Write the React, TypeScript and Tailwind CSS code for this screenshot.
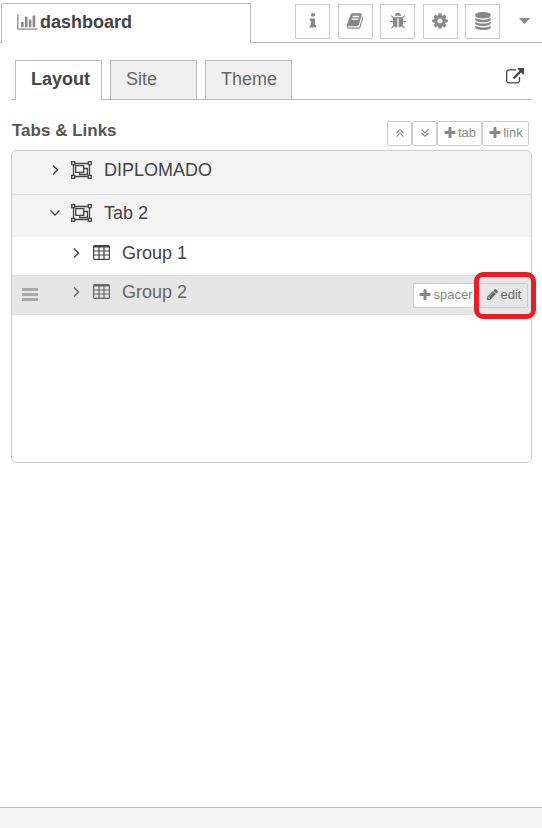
import type { ReactNode } from "react";

const PATHS = {
  chart:
    "M640 896v512h-256v-512h256zm384-512v1024h-256v-1024h256zm1024 1152v128h-2048v-1536h128v1408h1920zm-640-896v768h-256v-768h256zm384-384v1152h-256v-1152h256z",
  info: "M1216 1344v128q0 26-19 45t-45 19h-512q-26 0-45-19t-19-45v-128q0-26 19-45t45-19h64v-384h-64q-26 0-45-19t-19-45v-128q0-26 19-45t45-19h384q26 0 45 19t19 45v576h64q26 0 45 19t19 45zm-128-1152v192q0 26-19 45t-45 19h-256q-26 0-45-19t-19-45v-192q0-26 19-45t45-19h256q26 0 45 19t19 45z",
  book: "M1703 478q40 57 18 129l-275 906q-19 64-76.5 107.5t-122.5 43.5h-923q-77 0-148.5-53.5t-99.5-131.5q-24-67-2-127 0-4 3-27t4-37q1-8-3-21.5t-3-19.5q2-11 8-21t16.5-23.5 16.5-23.5q23-38 45-91.5t30-91.5q3-10 .5-30t-.5-28q3-11 17-28t17-23q21-36 42-92t25-90q1-9-2.5-32t.5-28q4-13 22-30.5t22-22.5q19-26 42.5-84.5t27.5-96.5q1-8-3-25.5t-2-26.5q2-8 9-18t18-23 17-21q8-12 16.5-30.5t15-35 16-36 19.5-32 26.5-23.5 36-11.5 47.5 5.5l-1 3q38-9 51-9h761q74 0 114 56t18 130l-274 906q-36 119-71.5 153.5t-128.5 34.5h-869q-27 0-38 15-11 16-1 43 24 70 144 70h923q29 0 56-15.5t35-41.5l300-987q7-22 5-57 38 15 59 43zm-1064 2q-4 13 2 22.5t20 9.5h608q13 0 25.5-9.5t16.5-22.5l21-64q4-13-2-22.5t-20-9.5h-608q-13 0-25.5 9.5t-16.5 22.5zm-83 256q-4 13 2 22.5t20 9.5h608q13 0 25.5-9.5t16.5-22.5l21-64q4-13-2-22.5t-20-9.5h-608q-13 0-25.5 9.5t-16.5 22.5z",
  bug: "M1696 960q0 26-19 45t-45 19h-224q0 171-67 290l208 209q19 19 19 45t-19 45q-18 19-45 19t-45-19l-198-197q-5 5-15 13t-42 28.5-65 36.5-82 29-97 13v-896h-128v896q-51 0-101.5-13.5t-87-33-66-39-43.5-32.5l-15-14-183 207q-20 21-48 21-24 0-43-16-19-18-20.5-44.5t15.5-46.5l202-227q-58-114-58-274h-224q-26 0-45-19t-19-45 19-45 45-19h224v-294l-173-173q-19-19-19-45t19-45 45-19 45 19l173 173h844l173-173q19-19 45-19t45 19 19 45-19 45l-173 173v294h224q26 0 45 19t19 45zm-480-576h-640q0-133 93.5-226.5t226.5-93.5 226.5 93.5 93.5 226.5z",
  cog: "M1152 896q0-106-75-181t-181-75-181 75-75 181 75 181 181 75 181-75 75-181zm512-109v222q0 12-8 23t-20 13l-185 28q-19 54-39 91 35 50 107 138 10 12 10 25t-9 23q-27 37-99 108t-94 71q-12 0-26-9l-138-108q-44 23-91 38-16 136-29 186-7 28-36 28h-222q-14 0-24.5-8.5t-11.5-21.5l-28-184q-49-16-90-37l-141 107q-10 9-25 9-14 0-25-11-126-114-165-168-7-10-7-23 0-12 8-23 15-21 51-66.5t54-70.5q-27-50-41-99l-183-27q-13-2-21-12.5t-8-23.5v-222q0-12 8-23t19-13l186-28q14-46 39-92-40-57-107-138-10-12-10-24 0-10 9-23 26-36 98.5-107.5t94.5-71.5q13 0 26 10l138 107q44-23 91-38 16-136 29-186 7-28 36-28h222q14 0 24.5 8.5t11.5 21.5l28 184q49 16 90 37l142-107q9-9 24-9 13 0 25 10 129 119 165 170 7 8 7 22 0 12-8 23-15 21-51 66.5t-54 70.5q26 50 41 98l183 28q13 2 21 12.5t8 23.5z",
  database:
    "M896 768q237 0 443-43t325-127v170q0 69-103 128t-280 93.5-385 34.5-385-34.5-280-93.5-103-128v-170q119 84 325 127t443 43zm0 768q237 0 443-43t325-127v170q0 69-103 128t-280 93.5-385 34.5-385-34.5-280-93.5-103-128v-170q119 84 325 127t443 43zm0-384q237 0 443-43t325-127v170q0 69-103 128t-280 93.5-385 34.5-385-34.5-280-93.5-103-128v-170q119 84 325 127t443 43zm0-1152q208 0 385 34.5t280 93.5 103 128v128q0 69-103 128t-280 93.5-385 34.5-385-34.5-280-93.5-103-128v-128q0-69 103-128t280-93.5 385-34.5z",
  external:
    "M1408 928v320q0 119-84.5 203.5t-203.5 84.5h-832q-119 0-203.5-84.5t-84.5-203.5v-832q0-119 84.5-203.5t203.5-84.5h704q14 0 23 9t9 23v64q0 14-9 23t-23 9h-704q-66 0-113 47t-47 113v832q0 66 47 113t113 47h832q66 0 113-47t47-113v-320q0-14 9-23t23-9h64q14 0 23 9t9 23zm384-864v512q0 26-19 45t-45 19-45-19l-176-176-652 652q-10 10-23 10t-23-10l-114-114q-10-10-10-23t10-23l652-652-176-176q-19-19-19-45t19-45 45-19h512q26 0 45 19t19 45z",
  plus: "M1600 736v192q0 40-28 68t-68 28h-416v416q0 40-28 68t-68 28h-192q-40 0-68-28t-28-68v-416h-416q-40 0-68-28t-28-68v-192q0-40 28-68t68-28h416v-416q0-40 28-68t68-28h192q40 0 68 28t28 68v416h416q40 0 68 28t28 68z",
  pencil:
    "M491 1536l91-91-235-235-91 91v107h128v128h107zm523-928q0-22-22-22-10 0-17 7l-542 542q-7 7-7 17 0 22 22 22 10 0 17-7l542-542q7-7 7-17zm-54-192l416 416-832 832h-416v-416zm683 96q0 53-37 90l-166 166-416-416 166-165q36-38 90-38 53 0 91 38l235 234q37 39 37 91z",
};

function Glyph({ name, className, width = 1792 }: { name: keyof typeof PATHS; className: string; width?: number }) {
  return (
    <svg viewBox={`0 0 ${width} 1792`} className={`shrink-0 ${className}`} fill="currentColor" aria-hidden="true">
      <path d={PATHS[name]} />
    </svg>
  );
}

function Chevron({ open = false }: { open?: boolean }) {
  return (
    <svg viewBox="0 0 12 12" className="h-3 w-3 shrink-0" fill="none" stroke="currentColor" strokeWidth="1.4" aria-hidden="true">
      <path d={open ? "M1.5 3.5 6 8 10.5 3.5" : "M4 1.5 8.5 6 4 10.5"} />
    </svg>
  );
}

function ObjectGroup() {
  return (
    <svg viewBox="0 0 21 18" className="h-[18px] w-[21px] shrink-0" fill="none" stroke="currentColor" strokeWidth="1.3" aria-hidden="true">
      <path d="M4 2.5h13M4 15.500h13M2.5 4v10M18.5 4v10" />
      <path d="M.7.7h3v3h-3zM17.3.7h3v3h-3zM.7 14.3h3v3h-3zM17.3 14.3h3v3h-3z" />
      <path d="M4.7 4.6h8v6.8h-8zM12.7 7.500h3.800v6H8.7v-2.100" />
    </svg>
  );
}

function TableIcon() {
  return (
    <svg viewBox="0 0 17 15" className="h-[15px] w-[17px] shrink-0" fill="none" stroke="currentColor" aria-hidden="true">
      <rect x=".6" y=".6" width="15.8" height="13.8" rx="1" strokeWidth="1.2" />
      <path d="M1 1.5h15" strokeWidth="2" />
      <path d="M1 6h15M1 10h15M6 2v12M11 2v12" strokeWidth="1.2" />
    </svg>
  );
}

function DoubleChevron({ down = false }: { down?: boolean }) {
  return (
    <svg viewBox="0 0 8 8" className="h-2 w-2" fill="none" stroke="currentColor" strokeWidth="1.1" aria-hidden="true">
      <path d={down ? "M.5.5 4 3.8 7.5.5M.5 4 4 7.3 7.5 4" : "M.5 4 4 .7 7.5 4M.5 7.5 4 4.2 7.5 7.5"} />
    </svg>
  );
}

function SmallButton({ children, className, label }: { children: ReactNode; className: string; label?: string }) {
  return (
    <button
      type="button"
      aria-label={label}
      className={`flex h-[25px] items-center justify-center rounded-xs border border-[#ccc] pb-[2px] text-[13px] leading-4 ${className}`}
    >
      {children}
    </button>
  );
}

const tools = [
  { name: "info", label: "Info" },
  { name: "book", label: "Help" },
  { name: "bug", label: "Debug" },
  { name: "cog", label: "Configuration" },
  { name: "database", label: "Context data" },
] as const;

export default function App() {
  return (
    <div className="flex min-h-screen flex-col bg-white font-['Liberation_Sans',Arial,sans-serif] text-[18px] leading-5 text-[#444]">
      <header className="flex h-[43px] items-end">
        <div className="h-px w-px bg-[#bbb]" />
        <button
          type="button"
          className="flex h-10 w-[250px] items-center gap-[2px] border border-b-0 border-[#bbb] px-[15px] pb-[3px] text-left font-bold"
        >
          <Glyph name="chart" width={2048} className="h-[18px] w-[21px] text-[#888]" />
          dashboard
        </button>
        <div className="flex h-full flex-1 items-start justify-end border-b border-[#bbb] pt-1 pr-[7px]">
          <div className="flex w-[205px] justify-between">
            {tools.map((tool) => (
              <button
                key={tool.name}
                type="button"
                aria-label={tool.label}
                className="flex h-[35px] w-[35px] items-center justify-center border border-[#ccc] pb-[2px] text-[#888]"
              >
                <Glyph name={tool.name} className="h-[18px] w-[18px]" />
              </button>
            ))}
          </div>
          <button type="button" aria-label="More panels" className="ml-[14px] flex h-[35px] w-[21px] items-center justify-center pb-[2px] text-[#888]">
            <svg viewBox="0 0 11 6" className="h-[6px] w-[11px]" fill="currentColor" aria-hidden="true">
              <path d="M0 0h11L5.5 6z" />
            </svg>
          </button>
        </div>
      </header>

      <main className="flex-1 pt-[17px] pr-[10px] pl-[11px]">
        <div className="flex items-stretch" role="tablist">
          <div className="w-1 border-b border-[#bbb]" />
          <button type="button" role="tab" aria-selected="true" className="h-10 w-[87px] border border-b-0 border-[#bbb] pb-1 pl-[15px] text-left font-bold">
            Layout
          </button>
          <div className="w-2 border-b border-[#bbb]" />
          <button type="button" role="tab" aria-selected="false" className="h-10 w-[87px] border border-[#bbb] bg-[#f0f0f0] pb-[3px] pl-[15px] text-left text-[#666]">
            Site
          </button>
          <div className="w-2 border-b border-[#bbb]" />
          <button type="button" role="tab" aria-selected="false" className="h-10 w-[87px] border border-[#bbb] bg-[#f0f0f0] pb-[3px] pl-[15px] text-left text-[#666]">
            Theme
          </button>
          <div className="flex flex-1 items-start justify-end border-b border-[#bbb] pt-2 pr-2">
            <a href="#dashboard" aria-label="Open dashboard">
              <Glyph name="external" className="h-[18px] w-[18px]" />
            </a>
          </div>
        </div>

        <div className="mt-[21px] flex items-start justify-between pr-[3px] pl-px">
          <h2 className="text-[17px] font-bold text-[#555]">Tabs &amp; Links</h2>
          <div className="flex text-[#888]">
            <SmallButton className="w-[25px]" label="Collapse all">
              <DoubleChevron />
            </SmallButton>
            <SmallButton className="w-[25px]" label="Expand all">
              <DoubleChevron down />
            </SmallButton>
            <SmallButton className="w-[45px] gap-px">
              <Glyph name="plus" className="h-3.5 w-3.5" />
              tab
            </SmallButton>
            <SmallButton className="w-[47px] gap-px">
              <Glyph name="plus" className="h-3.5 w-3.5" />
              link
            </SmallButton>
          </div>
        </div>

        <ul className="mt-1 min-h-[313px] rounded-[5px] border border-[#ccc]">
          <li className="flex h-[44px] items-center rounded-t-[4px] border-b border-[#ddd] bg-[#f3f3f3] pb-[5px] pl-[37px]">
            <Chevron />
            <span className="w-[10px]" />
            <ObjectGroup />
            <span className="pl-3">DIPLOMADO</span>
          </li>
          <li>
            <div className="flex h-[42px] items-center bg-[#f3f3f3] pb-[7px] pl-[37px]">
              <Chevron open />
              <span className="w-[10px]" />
              <ObjectGroup />
              <span className="pl-3">Tab 2</span>
            </div>
            <ul>
              <li className="flex h-[39px] items-center border-b border-[#ddd] pb-[7px] pl-[58px]">
                <Chevron />
                <span className="w-[11px]" />
                <TableIcon />
                <span className="pl-3">Group 1</span>
              </li>
              <li className="flex h-[39px] items-center border-b border-[#ddd] bg-[#e6e6e6] pt-px pr-[3px] pl-[10px] text-[#666]">
                <div className="pb-[3px]">
                  <svg viewBox="0 0 16 13" className="block h-[13px] w-4" fill="#aaa" aria-hidden="true">
                    <path d="M0 0h16v3H0zM0 5h16v3H0zM0 10h16v3H0z" />
                  </svg>
                </div>
                <div className="flex flex-1 items-center pb-2 pl-8">
                  <Chevron />
                  <span className="w-[11px]" />
                  <TableIcon />
                  <span className="pl-3">Group 2</span>
                </div>
                <div className="flex gap-px">
                  <SmallButton className="w-[65px] gap-px bg-white text-[#888]">
                    <Glyph name="plus" className="h-3.5 w-3.5" />
                    spacer
                  </SmallButton>
                  <div className="relative">
                    <SmallButton className="w-[49px] gap-[2px] bg-[#e6e6e6] text-[#666]">
                      <Glyph name="pencil" className="h-[13px] w-[13px]" />
                      edit
                    </SmallButton>
                    <div className="pointer-events-none absolute -top-[11px] -right-[8px] -bottom-[11px] -left-[5px] rounded-[9px] border-5 border-[#ed1c24]" />
                  </div>
                </div>
              </li>
            </ul>
          </li>
        </ul>
      </main>

      <footer className="h-[21px] border-t border-[#bbb] bg-[#f3f3f3]" />
    </div>
  );
}
